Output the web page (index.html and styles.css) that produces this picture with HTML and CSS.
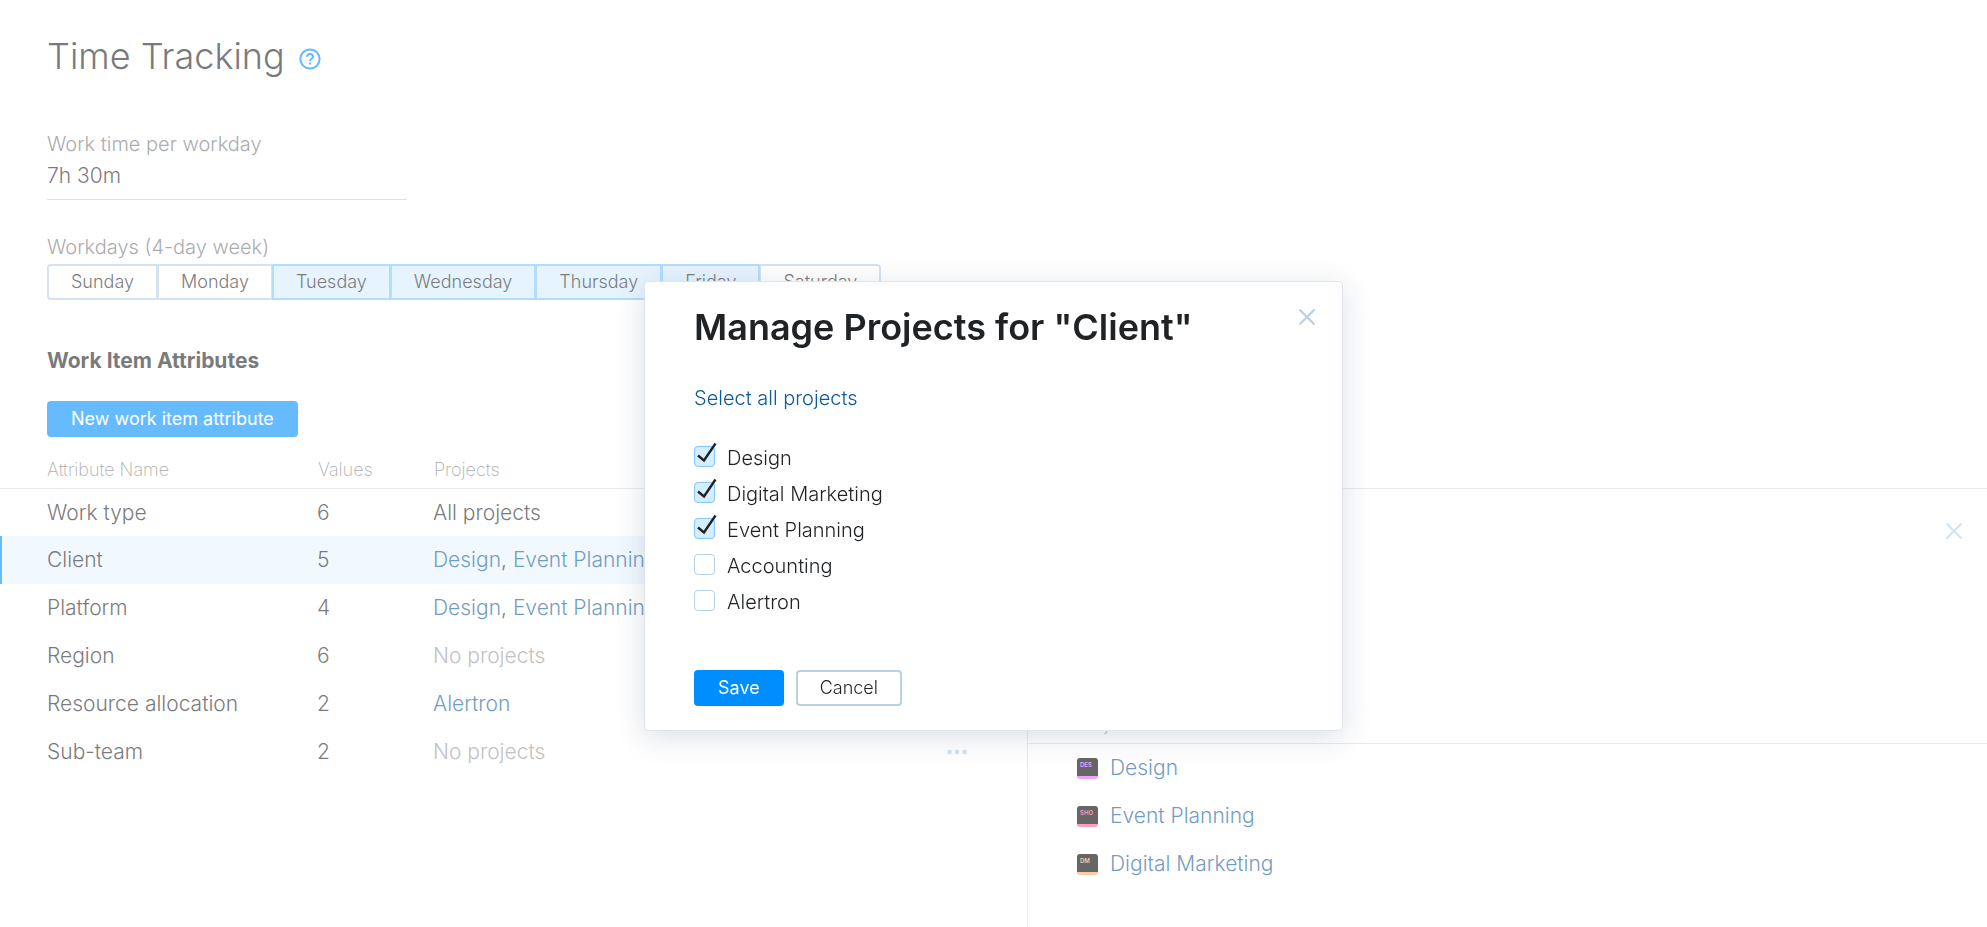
FILE: index.html
```html
<!DOCTYPE html>
<html lang="en">
<head>
    <meta charset="UTF-8">
    <meta name="viewport" content="width=device-width, initial-scale=1.0">
    <title>Time Tracking</title>
    <link rel="stylesheet" href="styles.css">
</head>
<body>
    <main class="page">
        <!-- Title -->
        <header class="page-header">
            <h1 class="page-title">Time Tracking</h1>
            <a class="help" href="#" aria-label="Help">
                <svg width="22" height="22" viewBox="0 0 22 22" fill="none" stroke="currentColor" stroke-width="2">
                    <circle cx="11" cy="11" r="9.6"/>
                    <path d="M8 8.8C8 7.1 9.3 6 11 6s3 1.1 3 2.7c0 1.9-2.9 2.1-2.9 4.3"/>
                    <path d="M11 14.6v2"/>
                </svg>
            </a>
        </header>

        <!-- Work time settings -->
        <section class="settings">
            <label class="label" for="worktime">Work time per workday</label>
            <input class="text-input" id="worktime" type="text" value="7h 30m">
            <div class="label" id="workdays-label">Workdays (4-day week)</div>
            <div class="days" role="group" aria-labelledby="workdays-label">
                <button class="day">Sunday</button>
                <button class="day">Monday</button>
                <button class="day active">Tuesday</button>
                <button class="day active">Wednesday</button>
                <button class="day active">Thursday</button>
                <button class="day active">Friday</button>
                <button class="day">Saturday</button>
            </div>
            <h2 class="section-title">Work Item Attributes</h2>
            <button class="button primary">New work item attribute</button>
        </section>

        <!-- Attributes and the details of the selected one -->
        <div class="columns">
            <table class="attributes">
                <thead>
                    <tr>
                        <th class="col-name">Attribute Name</th>
                        <th class="col-values">Values</th>
                        <th>Projects</th>
                        <th class="col-more"></th>
                    </tr>
                </thead>
                <tbody>
                    <tr>
                        <td>Work type</td>
                        <td>6</td>
                        <td>All projects</td>
                        <td></td>
                    </tr>
                    <tr class="selected">
                        <td>Client</td>
                        <td>5</td>
                        <td><a href="#">Design</a>, <a href="#">Event Planning</a></td>
                        <td></td>
                    </tr>
                    <tr>
                        <td>Platform</td>
                        <td>4</td>
                        <td><a href="#">Design</a>, <a href="#">Event Planning</a></td>
                        <td></td>
                    </tr>
                    <tr>
                        <td>Region</td>
                        <td>6</td>
                        <td class="muted">No projects</td>
                        <td></td>
                    </tr>
                    <tr>
                        <td>Resource allocation</td>
                        <td>2</td>
                        <td><a href="#">Alertron</a></td>
                        <td></td>
                    </tr>
                    <tr>
                        <td>Sub-team</td>
                        <td>2</td>
                        <td class="muted">No projects</td>
                        <td>
                            <button class="icon-button" aria-label="More">
                                <svg width="20" height="6" viewBox="0 0 20 6" fill="currentColor">
                                    <circle cx="2.5" cy="3" r="2.4"/>
                                    <circle cx="10" cy="3" r="2.4"/>
                                    <circle cx="17.5" cy="3" r="2.4"/>
                                </svg>
                            </button>
                        </td>
                    </tr>
                </tbody>
            </table>

            <aside class="details">
                <div class="details-top">
                    <button class="icon-button" aria-label="Close panel">
                        <svg width="18" height="18" viewBox="0 0 18 18" fill="none" stroke="currentColor" stroke-width="2.2">
                            <path d="M1.500 1.500l15 15M16.500 1.500l-15 15"/>
                        </svg>
                    </button>
                </div>
                <h3 class="details-title">Projects</h3>
                <ul class="projects">
                    <li class="project"><span class="logo des">DES</span><a href="#">Design</a></li>
                    <li class="project"><span class="logo sho">SHO</span><a href="#">Event Planning</a></li>
                    <li class="project"><span class="logo dm">DM</span><a href="#">Digital Marketing</a></li>
                </ul>
            </aside>
        </div>
    </main>

    <!-- Dialog -->
    <div class="overlay">
        <form class="dialog" role="dialog" aria-labelledby="dialog-title">
            <div class="dialog-header">
                <h2 class="dialog-title" id="dialog-title">Manage Projects for "Client"</h2>
                <button class="icon-button" type="button" aria-label="Close dialog">
                    <svg width="18" height="18" viewBox="0 0 18 18" fill="none" stroke="currentColor" stroke-width="2.2">
                        <path d="M1.500 1.500l15 15M16.500 1.500l-15 15"/>
                    </svg>
                </button>
            </div>
            <a class="select-all" href="#">Select all projects</a>
            <div class="checks">
                <label class="check">
                    <span class="box">
                        <input type="checkbox" checked>
                        <svg class="tick" viewBox="0 0 21 21"><path d="M4 9.500l6 5L21.500-2.500"/></svg>
                    </span>
                    Design
                </label>
                <label class="check">
                    <span class="box">
                        <input type="checkbox" checked>
                        <svg class="tick" viewBox="0 0 21 21"><path d="M4 9.500l6 5L21.500-2.500"/></svg>
                    </span>
                    Digital Marketing
                </label>
                <label class="check">
                    <span class="box">
                        <input type="checkbox" checked>
                        <svg class="tick" viewBox="0 0 21 21"><path d="M4 9.500l6 5L21.500-2.500"/></svg>
                    </span>
                    Event Planning
                </label>
                <label class="check">
                    <span class="box">
                        <input type="checkbox">
                        <svg class="tick" viewBox="0 0 21 21"><path d="M4 9.500l6 5L21.500-2.500"/></svg>
                    </span>
                    Accounting
                </label>
                <label class="check">
                    <span class="box">
                        <input type="checkbox">
                        <svg class="tick" viewBox="0 0 21 21"><path d="M4 9.500l6 5L21.500-2.500"/></svg>
                    </span>
                    Alertron
                </label>
            </div>
            <div class="dialog-buttons">
                <button class="button primary" type="button">Save</button>
                <button class="button" type="button">Cancel</button>
            </div>
        </form>
    </div>
</body>
</html>
```
FILE: styles.css
```css
* {
    box-sizing: border-box;
}

body {
    margin: 0;
    background: #fff;
    color: #1f2326;
    font-family: Inter, "Liberation Sans", sans-serif;
    font-size: 21px;
    font-weight: 300;
    line-height: 24px;
}

h1, h2, h3, ul {
    margin: 0;
    padding: 0;
}

a {
    color: #0f5b99;
    text-decoration: none;
}

button, input {
    font: inherit;
    color: inherit;
}

.page {
    display: flex;
    flex-direction: column;
    min-height: 100vh;
}

/* Title */
.page-header {
    display: flex;
    align-items: center;
    gap: 14px;
    padding: 32px 47px 0;
}

.page-title {
    font-size: 36px;
    font-weight: 300;
    line-height: 48px;
}

.help {
    display: flex;
    padding-top: 6px;
    color: #008eff;
}

/* Settings */
.settings {
    display: flex;
    flex-direction: column;
    align-items: flex-start;
    padding: 52px 47px 0;
}

.label {
    color: #737577;
    font-size: 20px;
}

.text-input {
    width: 360px;
    height: 44px;
    margin-bottom: 35px;
    padding: 0 0 5px;
    border: none;
    border-bottom: 1px solid #b8d1e5;
    background: none;
    outline: none;
}

.days {
    display: flex;
    margin-top: 5px;
}

.day {
    height: 36px;
    margin-right: -1px;
    padding: 0 22px;
    border: 2px solid #b8d1e5;
    background: #fff;
    font-size: 18px;
}

.day:first-child {
    border-radius: 4px 0 0 4px;
}

.day:last-child {
    border-radius: 0 4px 4px 0;
}

.day.active {
    position: relative;
    border-color: #80c6ff;
    background: #d4edff;
}

.section-title {
    margin: 49px 0 28px;
    font-size: 21px;
    font-weight: 700;
}

/* Buttons */
.button {
    height: 36px;
    padding: 0 22px;
    border: 2px solid #b8d1e5;
    border-radius: 4px;
    background: #fff;
    font-size: 18px;
}

.button.primary {
    border-color: #008eff;
    background: #008eff;
    color: #fff;
    font-weight: 400;
}

.icon-button {
    display: flex;
    padding: 0;
    border: none;
    background: none;
    color: #b8d1e5;
}

/* Attributes table */
.columns {
    display: flex;
    flex: 1;
}

.attributes {
    flex: 0 0 1027px;
    width: 1027px;
    align-self: flex-start;
    border-spacing: 0;
    table-layout: fixed;
}

.attributes th,
.details-title {
    color: #737577;
    font-size: 18px;
    font-weight: 200;
    text-align: left;
}

.attributes th {
    height: 51px;
    padding: 14px 0 0 1px;
}

.attributes td {
    height: 48px;
    padding: 0;
    white-space: nowrap;
}

.attributes th:first-child,
.attributes td:first-child {
    padding-left: 47px;
}

.attributes tbody tr:first-child td {
    border-top: 1px solid #d9dce0;
}

.col-name {
    width: 317px;
}

.col-values {
    width: 116px;
}

.col-more {
    width: 80px;
}

.selected td {
    background: #e8f5ff;
}

.selected td:first-child {
    box-shadow: inset 2px 0 #008eff;
}

.muted {
    color: #999;
}

/* Details panel */
.details {
    flex: 1;
    margin-top: 51px;
    border-top: 1px solid #d9dce0;
    border-left: 1px solid #d9dce0;
}

.details-top {
    display: flex;
    justify-content: flex-end;
    align-items: flex-start;
    height: 203px;
    padding: 33px 24px 0;
}

.details-title {
    height: 52px;
    padding: 20px 49px 0;
    border-bottom: 1px solid #d9dce0;
}

.projects {
    list-style: none;
}

.project {
    display: flex;
    align-items: center;
    gap: 12px;
    height: 48px;
    padding: 0 49px;
}

.logo {
    width: 21px;
    height: 21px;
    padding: 4px 0 0 3px;
    border-bottom: 3px solid;
    border-radius: 3px;
    background: #000;
    font-size: 6px;
    font-weight: 600;
    line-height: 6px;
}

.des {
    color: #e066ff;
}

.sho {
    color: #ff5c99;
}

.dm {
    color: #ffa770;
}

/* Dialog */
.overlay {
    position: fixed;
    inset: 0;
    display: flex;
    justify-content: center;
    align-items: flex-start;
    padding-top: 281px;
    background: rgba(255, 255, 255, 0.4);
}

.dialog {
    display: flex;
    flex-direction: column;
    align-items: flex-start;
    width: 699px;
    padding: 21px 49px 24px;
    border: 1px solid #dfe5eb;
    border-radius: 4px;
    background: #fff;
    box-shadow: 0 6px 30px rgba(0, 42, 76, 0.15);
    font-size: 20px;
}

.dialog-header {
    display: flex;
    justify-content: space-between;
    align-items: flex-start;
    align-self: stretch;
    margin-right: -23px;
}

.dialog-header .icon-button {
    padding-top: 5px;
}

.dialog-title {
    font-size: 36px;
    font-weight: 600;
    line-height: 48px;
}

.select-all {
    margin-top: 35px;
}

.checks {
    margin: 30px 0 50px;
}

.check {
    display: flex;
    align-items: center;
    gap: 12px;
    height: 36px;
}

.box {
    position: relative;
    width: 21px;
    height: 21px;
    margin-bottom: 3px;
}

.box input {
    display: block;
    width: 21px;
    height: 21px;
    margin: 0;
    border: 1px solid #b8d1e5;
    border-radius: 4px;
    background: #fff;
    appearance: none;
}

.box input:checked {
    border-color: #80c6ff;
    background: #d4edff;
}

.tick {
    display: none;
    position: absolute;
    inset: 0;
    overflow: visible;
    fill: none;
    stroke: #1f2326;
    stroke-width: 2.4;
    pointer-events: none;
}

.box input:checked + .tick {
    display: block;
}

.dialog-buttons {
    display: flex;
    gap: 12px;
}
```
